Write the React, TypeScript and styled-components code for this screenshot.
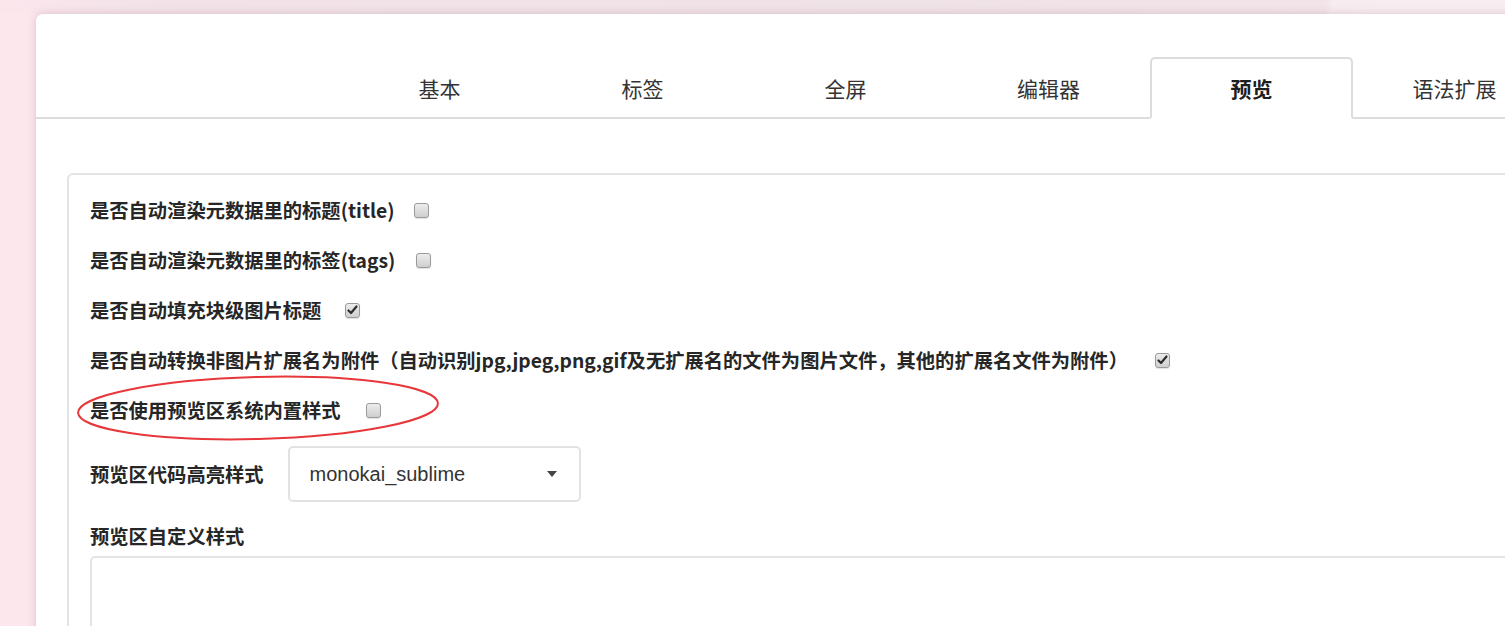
import React from "react";
import styled, { createGlobalStyle } from "styled-components";

const Global = createGlobalStyle`
  html, body {
    margin: 0;
    padding: 0;
    width: 1505px;
    height: 626px;
    overflow: hidden;
  }
  body {
    background:
      linear-gradient(100deg, rgba(255,255,255,0) 0%, rgba(255,255,255,0) 88%, rgba(255,255,255,0.35) 88.5%, rgba(255,255,255,0.35) 100%) top / 100% 14px no-repeat,
      linear-gradient(90deg, #fbe6ec 0px, #f3e3e8 140px, #efe2e6 900px, #f3e4e9 1380px) top / 100% 14px no-repeat,
      #fce7ed;
    font-family: "Liberation Sans", "Noto Sans CJK SC", sans-serif;
  }
`;

const Page = styled.div`
  padding: 14px 0 0 36px;
`;

const Card = styled.div`
  width: 1600px;
  height: 700px;
  background: #fff;
  border-radius: 7px 0 0 0;
  box-shadow: 0 0 8px rgba(120, 60, 80, 0.22);
`;

const TabBar = styled.div`
  height: 103px;
  display: flex;
  align-items: flex-end;
  padding-left: 302px;
  border-bottom: 2px solid #dcdcdc;
`;

const Tab = styled.div<{ $active?: boolean }>`
  box-sizing: border-box;
  width: 203px;
  height: 62px;
  margin-bottom: -2px;
  display: flex;
  align-items: center;
  justify-content: center;
  font-family: "Noto Sans CJK SC", sans-serif;
  font-size: 21px;
  font-weight: ${(p) => (p.$active ? 700 : 400)};
  color: ${(p) => (p.$active ? "#1e1e1e" : "#333")};
  background: ${(p) => (p.$active ? "#fff" : "transparent")};
  border: 2px solid ${(p) => (p.$active ? "#dcdcdc" : "transparent")};
  border-bottom-color: ${(p) => (p.$active ? "#fff" : "transparent")};
  border-radius: 5px 5px 0 0;
`;

const Content = styled.div`
  padding: 54px 0 0 31px;
`;

const Panel = styled.div`
  border: 2px solid #e4e4e4;
  border-radius: 6px 0 0 0;
  padding: 10px 0 0 21px;
  height: 600px;
`;

const Row = styled.div`
  position: relative;
  height: 50px;
  display: flex;
  align-items: center;
`;

const Label = styled.span`
  font-family: "Noto Sans CJK SC", sans-serif;
  font-size: 19.3px;
  font-weight: 700;
  color: #262626;
  white-space: nowrap;
`;

const Box = styled.span<{ $gap?: number }>`
  box-sizing: border-box;
  width: 15px;
  height: 15px;
  margin-left: ${(p) => p.$gap ?? 21}px;
  border: 1px solid #9a9a9a;
  border-radius: 3px;
  background: linear-gradient(#ececec, #cfcfcf);
  box-shadow: 0 1px 1px rgba(0, 0, 0, 0.12);
  display: flex;
  align-items: center;
  justify-content: center;
`;

const Ellipse = styled.svg`
  position: absolute;
  left: -14px;
  top: -12px;
  overflow: visible;
  pointer-events: none;
`;

const SelectRow = styled.div`
  display: flex;
  align-items: center;
  padding-top: 11px;
`;

const Select = styled.div`
  box-sizing: border-box;
  width: 293px;
  height: 56px;
  margin-left: 24px;
  border: 2px solid #e2e2e2;
  border-radius: 5px;
  display: flex;
  align-items: center;
  justify-content: space-between;
  padding: 0 22px 0 20px;
  font-family: "Liberation Sans", sans-serif;
  font-size: 20px;
  color: #333;
`;

const Caret = styled.span`
  width: 0;
  height: 0;
  border-left: 5px solid transparent;
  border-right: 5px solid transparent;
  border-top: 6px solid #444;
`;

const BlockLabel = styled(Label)`
  display: block;
  margin-top: 20px;
  line-height: 28px;
`;

const TextArea = styled.div`
  margin-top: 6px;
  height: 120px;
  border: 2px solid #e4e4e4;
  border-radius: 5px 0 0 0;
`;

function Check({ checked, gap }: { checked?: boolean; gap?: number }) {
  return (
    <Box $gap={gap}>
      {checked && (
        <svg width="11" height="10" viewBox="0 0 11 10">
          <path d="M1.5 5.5 L4 8 L9.5 1.5" fill="none" stroke="#2d2d2d" strokeWidth="2.2" strokeLinecap="round" strokeLinejoin="round" />
        </svg>
      )}
    </Box>
  );
}

const tabs = ["基本", "标签", "全屏", "编辑器", "预览", "语法扩展"];

export default function App() {
  return (
    <>
      <Global />
      <Page>
        <Card>
          <TabBar>
            {tabs.map((t) => (
              <Tab key={t} $active={t === "预览"}>
                {t}
              </Tab>
            ))}
          </TabBar>
          <Content>
            <Panel>
              <Row>
                <Label>是否自动渲染元数据里的标题(title)</Label>
                <Check gap={19} />
              </Row>
              <Row>
                <Label>是否自动渲染元数据里的标签(tags)</Label>
                <Check gap={21} />
              </Row>
              <Row>
                <Label>是否自动填充块级图片标题</Label>
                <Check checked gap={24} />
              </Row>
              <Row>
                <Label>
                  是否自动转换非图片扩展名为附件（自动识别jpg,jpeg,png,gif及无扩展名的文件为图片文件，其他的扩展名文件为附件）
                </Label>
                <Check checked gap={27} />
              </Row>
              <Row>
                <Label>是否使用预览区系统内置样式</Label>
                <Check gap={25} />
                <Ellipse width="366" height="70" viewBox="0 0 366 70">
                  <ellipse
                    cx="182"
                    cy="35"
                    rx="180"
                    ry="31"
                    fill="none"
                    stroke="#e8373a"
                    strokeWidth="2"
                    transform="rotate(-1.5 182 35)"
                  />
                </Ellipse>
              </Row>
              <SelectRow>
                <Label>预览区代码高亮样式</Label>
                <Select>
                  <span>monokai_sublime</span>
                  <Caret />
                </Select>
              </SelectRow>
              <BlockLabel>预览区自定义样式</BlockLabel>
              <TextArea />
            </Panel>
          </Content>
        </Card>
      </Page>
    </>
  );
}
